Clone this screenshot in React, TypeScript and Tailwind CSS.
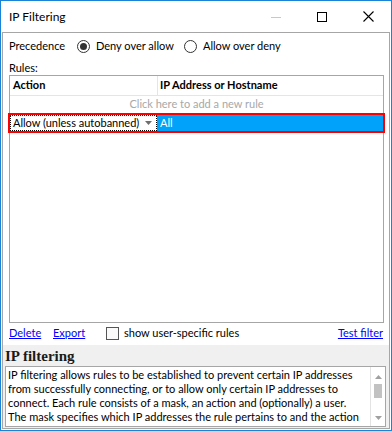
import React from "react";

const ui = "font-['Lato',sans-serif]";

const helpLines = [
  "IP filtering allows rules to be established to prevent certain IP addresses",
  "from successfully connecting, or to allow only certain IP addresses to",
  "connect. Each rule consists of a mask, an action and (optionally) a user.",
  "The mask specifies which IP addresses the rule pertains to and the action",
];

function Radio({ checked }: { checked?: boolean }) {
  return (
    <span className="w-[13px] h-[13px] rounded-full border border-[#333] bg-white flex items-center justify-center shrink-0">
      {checked && <span className="w-[7px] h-[7px] rounded-full bg-[#333]" />}
    </span>
  );
}

function TitleButtons() {
  return (
    <div className="ml-auto flex h-full">
      <div className="w-[46px] h-full flex items-center justify-center">
        <svg width="10" height="10" viewBox="0 0 10 10">
          <path d="M0 5.5h10" stroke="#c8c8c8" strokeWidth="1" />
        </svg>
      </div>
      <div className="w-[46px] h-full flex items-center justify-center">
        <svg width="10" height="10" viewBox="0 0 10 10">
          <rect x="0.5" y="0.5" width="9" height="9" fill="none" stroke="#000" strokeWidth="1" />
        </svg>
      </div>
      <div className="w-[46px] h-full flex items-center justify-center">
        <svg width="11" height="11" viewBox="0 0 11 11">
          <path d="M0.5 0.5l10 10M10.5 0.5l-10 10" stroke="#000" strokeWidth="1.1" />
        </svg>
      </div>
    </div>
  );
}

export default function App() {
  return (
    <div className={`w-[392px] h-[431px] border border-[#1883d7] bg-white flex flex-col overflow-hidden text-[11px] text-black whitespace-nowrap ${ui}`}>
      <div className="h-[31px] shrink-0 flex items-center pl-[8px]">
        <span className="text-[12px]">IP Filtering</span>
        <TitleButtons />
      </div>

      <div className="mx-[1px] mb-[1px] flex-1 border border-[#a6a6a6] flex flex-col min-h-0">
        <div className="pt-[3px] pl-[6px] h-[23px] flex items-center shrink-0">
          <span className="w-[68px]">Precedence</span>
          <Radio checked />
          <span className="ml-[6px] w-[88px]">Deny over allow</span>
          <Radio />
          <span className="ml-[6px]">Allow over deny</span>
        </div>
        <div className="h-[19px] pt-[4px] pl-[6px] leading-[15px] shrink-0">Rules:</div>

        <div className="ml-[6px] mr-[5px] h-[248px] border border-[#a6a6a6] flex flex-col shrink-0">
          <div className="h-[20px] flex border-b border-[#e5e5e5] font-bold">
            <div className="w-[147px] pl-[3px] flex items-center">Action</div>
            <div className="flex-1 border-l border-[#e5e5e5] pl-[2px] flex items-center">IP Address or Hostname</div>
          </div>
          <div className="h-[17px] flex items-center justify-center text-[#a8a8a8]">Click here to add a new rule</div>
          <div className="h-[20px] -mx-[2px] border-2 border-[#ff0000] flex">
            <div className="w-[147px] border border-dotted border-black pl-[2px] pr-[4px] flex items-center">
              <span>Allow (unless autobanned)</span>
              <svg className="ml-auto" width="7" height="4" viewBox="0 0 7 4">
                <path d="M0 0h7L3.5 4z" fill="#6e6e6e" />
              </svg>
            </div>
            <div className="flex-1 bg-[#00a2fa] text-white pl-[3px] flex items-center">All</div>
          </div>
        </div>

        <div className="h-[22px] pt-[2px] pl-[6px] pr-[6px] leading-[16px] flex items-start shrink-0">
          <span className="w-[44px] text-[#0000ff] underline">Delete</span>
          <span className="w-[53px] text-[#0000ff] underline">Export</span>
          <span className="mt-[2px] w-[13px] h-[13px] border border-[#555] bg-[#fafafa] shrink-0" />
          <span className="ml-[5px]">show user-specific rules</span>
          <span className="ml-auto text-[#0000ff] underline">Test filter</span>
        </div>

        <div className="flex-1 bg-[#f0f0f0] flex flex-col min-h-0">
          <div className="pt-[2px] pl-[2px] h-[21px] leading-[19px] font-bold text-[15px] font-['Liberation_Serif',serif] text-[#1a1a1a]">
            IP filtering
          </div>
          <div className="ml-[2px] mr-[3px] h-[61px] border border-[#a6a6a6] bg-white flex overflow-hidden">
            <div className="flex-1 pl-[2px] pt-[1px] leading-[14px] overflow-hidden">
              {helpLines.map((l) => (
                <div key={l}>{l}</div>
              ))}
            </div>
            <div className="w-[15px] border-l border-[#e3e3e3] flex flex-col items-center shrink-0">
              <svg className="mt-[8px]" width="7" height="4" viewBox="0 0 7 4">
                <path d="M3.5 0L7 4H0z" fill="#a0a0a0" />
              </svg>
              <div className="mt-[5px] w-[8px] h-[14px] bg-[#c2c2c2]" />
              <svg className="mt-auto mb-[6px]" width="7" height="4" viewBox="0 0 7 4">
                <path d="M0 0h7L3.5 4z" fill="#a0a0a0" />
              </svg>
            </div>
          </div>
        </div>
      </div>
    </div>
  );
}
